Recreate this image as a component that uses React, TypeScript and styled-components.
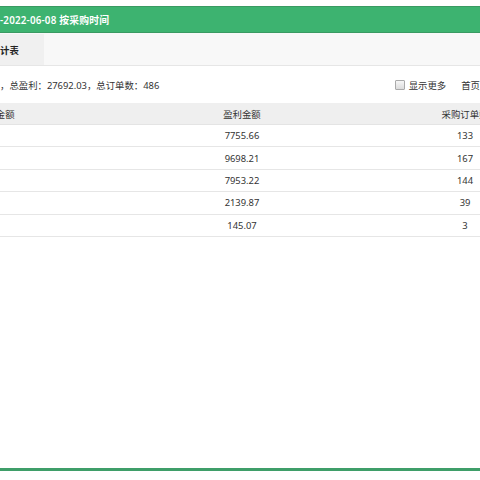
import React from "react";
import styled, { createGlobalStyle } from "styled-components";

const Global = createGlobalStyle`
  html, body { margin: 0; padding: 0; overflow: hidden; background: #ffffff; }
  body { font-family: "Noto Sans", "Noto Sans CJK SC", sans-serif; font-size: 9px; color: #333; }
`;

const Page = styled.div`
  width: 480px;
  height: 480px;
  padding-top: 6px;
  box-sizing: border-box;
  overflow: hidden;
`;

const Panel = styled.div`
  height: 465px;
  box-sizing: border-box;
  border-bottom: 3px solid #3f9e69;
  display: flex;
  flex-direction: column;
`;

const TitleBar = styled.div`
  height: 27px;
  box-sizing: border-box;
  background: #3db370;
  border-top: 1px solid #3a9a62;
  border-bottom: 1px solid #3a9a62;
  display: flex;
  align-items: center;
  color: #ffffff;
  font-weight: 600;
  font-size: 9.8px;
  white-space: nowrap;
`;

const TitleText = styled.span`
  letter-spacing: 0.2px;
`;

const TabBar = styled.div`
  height: 33px;
  box-sizing: border-box;
  background: #f8f8f8;
  border-bottom: 1px solid #e6e6e6;
  display: flex;
  align-items: stretch;
  padding-top: 1px;
`;

const Tab = styled.div`
  width: 44px;
  background: #f0f0f0;
  display: flex;
  align-items: center;
  font-weight: 700;
  color: #222;
  font-size: 9.4px;
`;

const Toolbar = styled.div`
  height: 37px;
  display: flex;
  align-items: center;
  justify-content: space-between;
  font-size: 9.4px;
  white-space: nowrap;
`;

const Summary = styled.span`
  color: #333;
`;

const Tools = styled.div`
  display: flex;
  align-items: center;
  gap: 4px;
`;

const CheckBox = styled.span`
  width: 10px;
  height: 10px;
  box-sizing: border-box;
  border: 1px solid #aaaaaa;
  border-radius: 1px;
  background: linear-gradient(#f6f6f6, #dcdcdc);
`;

const PagerLink = styled.span`
  margin-left: 11px;
  color: #333;
`;

const Table = styled.div`
  width: 577px;
  display: grid;
  grid-template-columns: 131px 222px 224px;
`;

const HeadCell = styled.div<{ $align?: string }>`
  height: 22px;
  background: #efefef;
  border-bottom: 1px solid #e4e4e4;
  box-sizing: border-box;
  display: flex;
  align-items: center;
  justify-content: ${(p) => p.$align || "center"};
  color: #333;
  font-size: 9.4px;
  white-space: nowrap;
`;

const Cell = styled.div<{ $align?: string }>`
  height: 22.4px;
  border-bottom: 1px solid #e6e6e6;
  box-sizing: border-box;
  display: flex;
  align-items: center;
  justify-content: ${(p) => p.$align || "center"};
  color: #333;
  font-size: 9.4px;
  white-space: nowrap;
`;

const Shifted = styled.span<{ $shift: number }>`
  margin-left: ${(p) => p.$shift}px;
`;

const rows = [
  { profit: "7755.66", count: "133" },
  { profit: "9698.21", count: "167" },
  { profit: "7953.22", count: "144" },
  { profit: "2139.87", count: "39" },
  { profit: "145.07", count: "3" },
];

export default function App() {
  return (
    <>
      <Global />
      <Page>
        <Panel>
          <TitleBar>
            <TitleText>-2022-06-08 按采购时间</TitleText>
          </TitleBar>
          <TabBar>
            <Tab>计表</Tab>
          </TabBar>
          <Toolbar>
            <Summary>，总盈利：27692.03，总订单数：486</Summary>
            <Tools>
              <CheckBox />
              <span>显示更多</span>
              <PagerLink>首页</PagerLink>
            </Tools>
          </Toolbar>
          <Table>
            <HeadCell $align="flex-start">
              <Shifted $shift={-23}>采购金额</Shifted>
            </HeadCell>
            <HeadCell>盈利金额</HeadCell>
            <HeadCell>采购订单数</HeadCell>
            {rows.map((r) => (
              <React.Fragment key={r.profit}>
                <Cell $align="flex-start" />
                <Cell>{r.profit}</Cell>
                <Cell>{r.count}</Cell>
              </React.Fragment>
            ))}
          </Table>
        </Panel>
      </Page>
    </>
  );
}
